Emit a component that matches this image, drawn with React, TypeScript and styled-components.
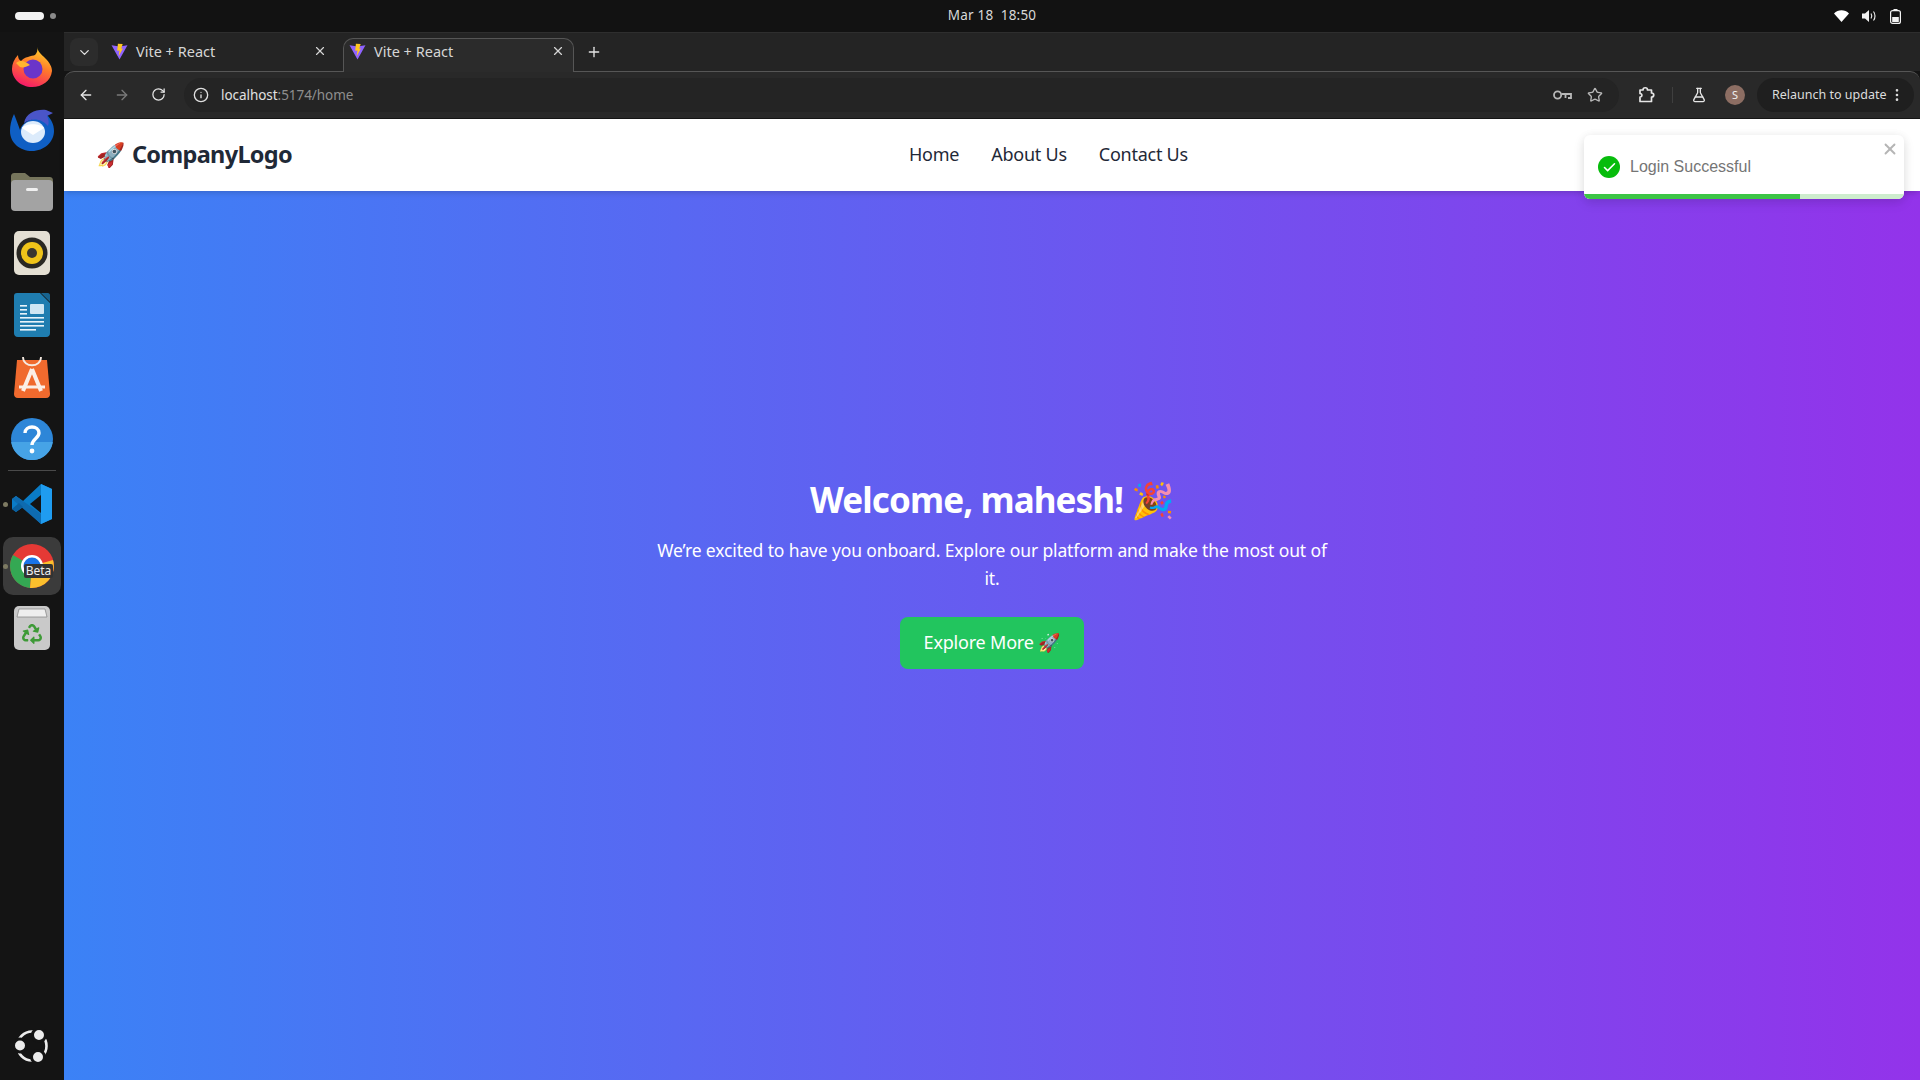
import React from 'react';
import styled, { createGlobalStyle } from 'styled-components';
import { ChevronDown, X, Plus, ArrowLeft, ArrowRight, RotateCw, Info, Star, FlaskConical, EllipsisVertical, Check } from 'lucide-react';
import { FaRecycle } from 'react-icons/fa';

const UI_FONT = `"Noto Sans", "Open Sans", "Noto Color Emoji", sans-serif`;

const GlobalStyle = createGlobalStyle`
    html, body {
        margin: 0;
        padding: 0;
        width: 1920px;
        height: 1080px;
        overflow: hidden;
        background: #141414;
        font-family: ${UI_FONT};
    }
    * { box-sizing: border-box; }
`;

const Desktop = styled.div`
    display: grid;
    grid-template-rows: 32px 1fr;
    grid-template-columns: 64px 1fr;
    width: 1920px;
    height: 1080px;
    background: #141414;
`;

// gnome top bar
const TopBar = styled.div`
    grid-column: 1 / 3;
    display: grid;
    grid-template-columns: 1fr auto 1fr;
    align-items: center;
    padding: 0 19px 0 15px;
    background: #121212;
    color: #d8d8d8;
`;

const Workspaces = styled.div`
    display: flex;
    align-items: center;
    gap: 6px;
`;

const WorkspacePill = styled.span`
    width: 29px;
    height: 8px;
    border-radius: 4px;
    background: #f2f2f2;
`;

const WorkspaceDot = styled.span`
    width: 6px;
    height: 6px;
    border-radius: 50%;
    background: #8a8a8a;
`;

const Clock = styled.div`
    font-size: 13.5px;
    letter-spacing: 0.2px;
    white-space: pre;
    margin-left: 68px;
    padding-bottom: 2px;
`;

const Tray = styled.div`
    display: flex;
    justify-content: flex-end;
    align-items: center;
    gap: 13px;
`;

const Dock = styled.div`
    display: flex;
    flex-direction: column;
    align-items: center;
    background: #141414;
    padding-top: 4px;
`;

const DockSlot = styled.div<{ $h: number; $active?: boolean }>`
    width: 58px;
    height: ${p => p.$h}px;
    flex: none;
    display: flex;
    align-items: center;
    justify-content: center;
    position: relative;
    border-radius: 10px;
    background: ${p => (p.$active ? '#3b3b3b' : 'transparent')};
`;

const DockRule = styled.div`
    width: 48px;
    height: 1px;
    flex: none;
    background: #4a4a4a;
`;

const RunningDot = styled.span`
    position: absolute;
    left: 0;
    top: 50%;
    margin-top: -2.5px;
    width: 5px;
    height: 5px;
    border-radius: 50%;
    background: #7d7a62;
`;

const DockBottom = styled.div`
    margin-top: auto;
    height: 68px;
    display: flex;
    align-items: center;
`;

const Browser = styled.div`
    display: flex;
    flex-direction: column;
    min-width: 0;
`;

const TabStrip = styled.div`
    height: 39px;
    flex: none;
    display: flex;
    align-items: flex-end;
    background: #242424;
    border-top: 1px solid #2e2e2e;
    padding-left: 40px;
    position: relative;
`;

const TabSearch = styled.div`
    position: absolute;
    left: 6px;
    top: 5px;
    width: 28px;
    height: 28px;
    border-radius: 8px;
    background: #2c2c2c;
    color: #e4e4e4;
    display: flex;
    align-items: center;
    justify-content: center;
`;

const Tab = styled.div<{ $active?: boolean }>`
    width: 231px;
    height: 34px;
    margin-left: ${p => (p.$active ? '8px' : '0')};
    margin-bottom: -1px;
    display: flex;
    align-items: center;
    padding: 0 8px ${p => (p.$active ? '9px' : '8px')} ${p => (p.$active ? '5px' : '7px')};
    gap: 8px;
    color: #d6d6d6;
    font-size: 14.5px;
    border-radius: 10px 10px 0 0;
    background: ${p => (p.$active ? '#2b2b2b' : 'transparent')};
    border: ${p => (p.$active ? '1px solid #565656' : '0')};
    border-bottom: 0;
    position: relative;
    z-index: 1;
`;

const TabTitle = styled.span`
    flex: 1;
    white-space: nowrap;
`;

const NewTab = styled.div`
    width: 40px;
    height: 33px;
    display: flex;
    align-items: center;
    justify-content: center;
    padding-bottom: 6px;
    color: #e4e4e4;
`;

const Toolbar = styled.div`
    height: 48px;
    flex: none;
    display: flex;
    align-items: center;
    background: #292929;
    border-top: 1px solid #565656;
    border-bottom: 1px solid #161616;
    border-top-left-radius: 10px;
    border-top-right-radius: 10px;
    padding: 0 6px 1px 4px;
`;

const NavIcon = styled.div<{ $dim?: boolean }>`
    width: 36px;
    display: flex;
    justify-content: center;
    color: ${p => (p.$dim ? '#7a7a7a' : '#e6e6e6')};
`;

const AddressBar = styled.div`
    width: 1435px;
    height: 34px;
    margin-left: 8px;
    display: flex;
    align-items: center;
    border-radius: 17px;
    background: #242424;
    padding: 0 16px 0 5px;
`;

const InfoChip = styled.div`
    width: 24px;
    display: flex;
    justify-content: center;
    color: #e0e0e0;
    margin-right: 8px;
`;

const Url = styled.div`
    flex: 1;
    font-size: 13.5px;
    letter-spacing: -0.05px;
    color: #e0e0e0;
`;

const UrlDim = styled.span`
    color: #8e8e8e;
`;

const AddressIcons = styled.div`
    display: flex;
    align-items: center;
    gap: 15px;
    color: #b8b8b8;
`;

const ToolIcon = styled.div`
    width: 36px;
    display: flex;
    justify-content: center;
    color: #e6e6e6;
`;

const ExtensionSlot = styled(ToolIcon)`
    margin-left: 9px;
`;

const ToolSep = styled.div`
    width: 1px;
    height: 16px;
    background: #3f3f3f;
    margin: 0 8px;
`;

const Avatar = styled.div`
    width: 20px;
    height: 20px;
    border-radius: 50%;
    background: #8d6e63;
    color: #f1f1f1;
    font-size: 11px;
    display: flex;
    align-items: center;
    justify-content: center;
    margin: 0 12px 0 8px;
`;

const Relaunch = styled.div`
    width: 157px;
    height: 34px;
    border-radius: 17px;
    background: #1f1f1f;
    color: #dcdcdc;
    font-size: 12.5px;
    display: flex;
    align-items: center;
    justify-content: space-between;
    padding: 0 9px 0 15px;
    white-space: nowrap;
`;

// the page itself
const Page = styled.div`
    flex: 1;
    display: flex;
    flex-direction: column;
    min-height: 0;
    position: relative;
`;

const NavBar = styled.nav`
    height: 72px;
    flex: none;
    display: grid;
    grid-template-columns: 813px auto;
    align-items: center;
    padding: 0 0 2px 32px;
    background: #fff;
    box-shadow: 0 4px 6px -1px rgba(0, 0, 0, 0.1), 0 2px 4px -2px rgba(0, 0, 0, 0.1);
    position: relative;
`;

const Brand = styled.div`
    font-size: 23.5px;
    font-weight: 700;
    letter-spacing: -0.7px;
    word-spacing: 2px;
    color: #1f2937;
    white-space: nowrap;
`;

const NavLinks = styled.div`
    display: flex;
    gap: 32px;
`;

const NavLink = styled.a`
    font-size: 18px;
    letter-spacing: -0.25px;
    color: #1f2937;
`;

const Hero = styled.main`
    flex: 1;
    display: flex;
    flex-direction: column;
    align-items: center;
    justify-content: center;
    padding-bottom: 123px;
    color: #fff;
    text-align: center;
    background: linear-gradient(to right, #3b82f6, #9333ea);
`;

const Title = styled.h1`
    margin: 0;
    font-size: 35px;
    line-height: 40px;
    font-weight: 700;
    letter-spacing: -0.9px;
`;

const Lead = styled.p`
    margin: 16px 0 0;
    width: 672px;
    font-size: 17.5px;
    line-height: 28px;
    letter-spacing: -0.13px;
`;

const Cta = styled.button`
    margin-top: 25px;
    width: 184px;
    height: 52px;
    padding: 0 0 2px;
    border: 0;
    border-radius: 8px;
    background: #22c55e;
    color: #fff;
    font-family: inherit;
    font-size: 18px;
    letter-spacing: -0.2px;
`;

const Toast = styled.div`
    position: absolute;
    top: 16px;
    right: 16px;
    width: 320px;
    height: 64px;
    background: #fff;
    border-radius: 6px;
    box-shadow: 0 4px 12px rgba(0, 0, 0, 0.1), 0 1px 10px rgba(0, 0, 0, 0.06);
    display: flex;
    align-items: center;
    padding: 0 14px;
    gap: 10px;
    overflow: hidden;
    font-family: "Liberation Sans", Arial, sans-serif;
    font-size: 16px;
    color: #757575;
`;

const ToastIcon = styled.div`
    width: 22px;
    height: 22px;
    border-radius: 50%;
    background: #07bc0c;
    color: #fff;
    display: flex;
    align-items: center;
    justify-content: center;
`;

const ToastClose = styled.div`
    position: absolute;
    top: 5px;
    right: 5px;
    color: #b5b5b5;
    display: flex;
`;

const ToastTrack = styled.div`
    position: absolute;
    left: 0;
    right: 0;
    bottom: 0;
    height: 5px;
    background: #cdeccd;
`;

const ToastBar = styled.div`
    height: 100%;
    background: #3cc546;
`;

function ViteIcon() {
    return (
        <svg width="17" height="17" viewBox="0 0 16 16">
            <path d="M0.5 2 L8 3.2 L15.5 2 L8 15.5 Z" fill="#8f63ff" />
            <path d="M6.5 0.8 L11 1 L9.6 5.5 L11.2 5.2 L7.2 12.4 L8 7 L5.8 7.4 Z" fill="#ffc71f" />
        </svg>
    );
}

function FirefoxIcon() {
    return (
        <svg width="42" height="42" viewBox="0 0 42 42">
            <defs>
                <linearGradient id="ff" x1="0.7" y1="0" x2="0.3" y2="1">
                    <stop offset="0" stopColor="#ffd52b" />
                    <stop offset="0.45" stopColor="#ff7a2a" />
                    <stop offset="1" stopColor="#f5156c" />
                </linearGradient>
            </defs>
            <path d="M26 1 C27 6 31 9 34 12 C39 17 41 21 41 25 C40 35 31 41 21 41 C10 41 1 33 1 23 C1 18 3 13 7 9 C7 12 8 14 10 15 C13 11 21 10 24 9 C26 7 27 4 26 1 Z" fill="url(#ff)" />
            <circle cx="22" cy="23" r="9.5" fill="#6a35c9" />
            <path d="M5 17 C10 13 15 16 19 19 C15 21 12 22 9 21 Z" fill="#ffb52e" />
        </svg>
    );
}

function ThunderbirdIcon() {
    return (
        <svg width="46" height="46" viewBox="0 0 46 46">
            <path d="M5 8 C2 14 1 20 1 25 C1 37 11 45 23 45 C35 45 45 36 45 25 C45 18 42 13 38 9 C30 12 15 12 11 24 C9 18 7 13 5 8 Z" fill="#0f5fc4" />
            <path d="M15 17 C17 7 27 3 37 4 L44 7 L38 10 C40 14 40 17 39 20 C32 12 22 12 15 17 Z" fill="#4a55c8" />
            <ellipse cx="24" cy="26" rx="12" ry="11" fill="#dcebfb" />
            <path d="M13 22 L24 29 L35 22 C31 17 17 17 13 22 Z" fill="#ffffff" />
        </svg>
    );
}

function FilesIcon() {
    return (
        <svg width="44" height="40" viewBox="0 0 44 40">
            <path d="M1 6 C1 3 2 2 5 2 H15 L20 6 H39 C42 6 43 7 43 10 V20 H1 Z" fill="#76755c" />
            <rect x="1" y="9" width="42" height="31" rx="4" fill="#a3a3a3" />
            <rect x="16" y="17" width="12" height="3" rx="1.5" fill="#f0f0f0" />
        </svg>
    );
}

function RhythmboxIcon() {
    return (
        <svg width="36" height="44" viewBox="0 0 36 44">
            <rect width="36" height="44" rx="5" fill="#e4dfd3" />
            <circle cx="18" cy="22" r="15.5" fill="#2a2823" />
            <circle cx="18" cy="22" r="11" fill="#f0c419" />
            <circle cx="18" cy="22" r="5" fill="#3a372f" />
        </svg>
    );
}

function WriterIcon() {
    return (
        <svg width="36" height="44" viewBox="0 0 36 44">
            <path d="M3 0 H26 L36 10 V40 C36 42 35 44 32 44 H4 C1 44 0 42 0 40 V3 C0 1 1 0 3 0 Z" fill="#1f7db0" />
            <path d="M27 0 H34 C35 0 36 1 36 2 V9 Z" fill="#17638e" />
            <rect x="6" y="12" width="7" height="1.6" fill="#e8f4fa" />
            <rect x="6" y="16" width="7" height="1.6" fill="#e8f4fa" />
            <rect x="6" y="20" width="7" height="1.6" fill="#e8f4fa" />
            <rect x="16" y="11" width="14" height="10" rx="1" fill="#cfe6f3" />
            <rect x="6" y="24" width="24" height="1.6" fill="#e8f4fa" />
            <rect x="6" y="28" width="24" height="1.6" fill="#e8f4fa" />
            <rect x="6" y="32" width="24" height="1.6" fill="#e8f4fa" />
            <rect x="6" y="36" width="16" height="1.6" fill="#e8f4fa" />
        </svg>
    );
}

function StoreIcon() {
    return (
        <svg width="36" height="42" viewBox="0 0 36 42">
            <path d="M3 4 H33 L36 38 C36 40 35 42 32 42 H4 C1 42 0 40 0 38 Z" fill="#f06a2e" />
            <path d="M9 1 C9 12 27 12 27 1" fill="none" stroke="#f5e9e0" strokeWidth="1.8" />
            <path d="M18 13 L9 35 M18 13 L27 35" stroke="#fbeee6" strokeWidth="4" fill="none" />
            <path d="M5 31 H31" stroke="#fbeee6" strokeWidth="3" />
        </svg>
    );
}

function HelpIcon() {
    return (
        <svg width="42" height="42" viewBox="0 0 42 42">
            <circle cx="21" cy="21" r="21" fill="#2d86d8" />
            <path d="M0.2 24 H41.8 A21 21 0 0 1 0.2 24 Z" fill="#46a3e6" />
            <path d="M14 15 C14 7 28 7 28 15 C28 20 21 21 21 27" fill="none" stroke="#fff" strokeWidth="3.4" />
            <circle cx="21" cy="33" r="2.4" fill="#fff" />
        </svg>
    );
}

function VsCodeIcon() {
    return (
        <svg width="42" height="42" viewBox="0 0 42 42">
            <path d="M30 1 L41 6 V36 L30 41 L12 24 L5 29 L1 26 V16 L5 13 L12 18 Z" fill="#0a7cc7" />
            <path d="M1 16 L5 13 L30 31 V41 Z" fill="#0e6bb0" />
            <path d="M30 1 L41 6 V36 L30 41 Z" fill="#1f9cf0" />
            <path d="M30 12 L19 21 L30 30 Z" fill="#141414" />
            <path d="M1 26 L5 29 L12 24 L8 20 Z" fill="#0a5f9e" />
        </svg>
    );
}

function ChromeIcon() {
    return (
        <svg width="46" height="46" viewBox="0 0 46 46">
            <circle cx="23" cy="23" r="22" fill="#e53935" />
            <path d="M23 23 L4 12 A22 22 0 0 0 21 45 Z" fill="#34a853" />
            <path d="M23 23 L21 45 A22 22 0 0 0 44 17 Z" fill="#fbc02d" />
            <circle cx="23" cy="23" r="11" fill="#fff" />
            <circle cx="23" cy="23" r="8.5" fill="#1a73e8" />
            <rect x="15" y="21" width="29" height="14" rx="2" fill="#333" />
            <text x="29.5" y="32" fontSize="12" fill="#eee" textAnchor="middle" fontFamily="Noto Sans, sans-serif">Beta</text>
        </svg>
    );
}

function TrashIcon() {
    return (
        <svg width="36" height="44" viewBox="0 0 36 44">
            <rect width="36" height="44" rx="5" fill="#c9c9c9" />
            <path d="M5 3 H31 L33 11 H3 Z" fill="#eeeeee" stroke="#8a8a8a" strokeWidth="0.8" />
            <FaRecycle x={8} y={18} size={20} color="#3e9a37" />
        </svg>
    );
}

function UbuntuIcon() {
    return (
        <svg width="34" height="34" viewBox="0 0 34 34">
            <circle cx="17" cy="17" r="14.5" fill="none" stroke="#ececec" strokeWidth="2.6" />
            <circle cx="5" cy="16.5" r="6.5" fill="#ececec" stroke="#141414" strokeWidth="3" />
            <circle cx="24" cy="6" r="6.5" fill="#ececec" stroke="#141414" strokeWidth="3" />
            <circle cx="23" cy="28" r="6.5" fill="#ececec" stroke="#141414" strokeWidth="3" />
        </svg>
    );
}

function KeyIcon() {
    return (
        <svg width="19" height="12" viewBox="0 0 19 12" fill="none" stroke="currentColor" strokeWidth="1.8">
            <circle cx="4.6" cy="6" r="3.6" />
            <path d="M8.5 5 H18 V9 H15 M12.5 5 V9" />
        </svg>
    );
}

function ExtensionIcon() {
    return (
        <svg width="17" height="17" viewBox="0 0 17 17" fill="none" stroke="currentColor" strokeWidth="1.7" strokeLinejoin="round">
            <path d="M2 4 H5 C5 1 9.5 1 9.5 4 H13.5 V7 C16.5 7 16.5 11 13.5 11 V15.5 H2 V11 C4.5 11 4.5 7.5 2 7.5 Z" />
        </svg>
    );
}

function WifiIcon() {
    return (
        <svg width="15" height="12" viewBox="0 0 15 12"><path d="M0 3.5 C4 -0.8 11 -0.8 15 3.5 L7.5 12 Z" fill="#fff" /></svg>
    );
}

function VolumeIcon() {
    return (
        <svg width="15" height="14" viewBox="0 0 15 14">
            <path d="M0 4.5 H3 L7 1 V13 L3 9.5 H0 Z" fill="#f2f2f2" />
            <path d="M9 4.5 C10 6 10 8 9 9.5 M11.5 2.5 C13.5 5 13.5 9 11.5 11.5" stroke="#f2f2f2" fill="none" strokeWidth="1.1" />
        </svg>
    );
}

function BatteryIcon() {
    return (
        <svg width="11" height="15" viewBox="0 0 11 15">
            <rect x="3.5" y="0" width="4" height="2" fill="#f2f2f2" />
            <rect x="0.6" y="1.6" width="9.8" height="12.8" rx="2" fill="none" stroke="#f2f2f2" strokeWidth="1.2" />
            <rect x="2.2" y="8" width="6.6" height="5" fill="#f2f2f2" />
        </svg>
    );
}

export default function App(): JSX.Element {
    return (
        <Desktop>
            <GlobalStyle />
            <TopBar>
                <Workspaces>
                    <WorkspacePill />
                    <WorkspaceDot />
                </Workspaces>
                <Clock>Mar 18  18:50</Clock>
                <Tray>
                    <WifiIcon />
                    <VolumeIcon />
                    <BatteryIcon />
                </Tray>
            </TopBar>

            <Dock>
                <DockSlot $h={62}><FirefoxIcon /></DockSlot>
                <DockSlot $h={62}><ThunderbirdIcon /></DockSlot>
                <DockSlot $h={62}><FilesIcon /></DockSlot>
                <DockSlot $h={62}><RhythmboxIcon /></DockSlot>
                <DockSlot $h={62}><WriterIcon /></DockSlot>
                <DockSlot $h={62}><StoreIcon /></DockSlot>
                <DockSlot $h={62}><HelpIcon /></DockSlot>
                <DockRule />
                <DockSlot $h={66}><RunningDot /><VsCodeIcon /></DockSlot>
                <DockSlot $h={58} $active><RunningDot /><ChromeIcon /></DockSlot>
                <DockSlot $h={66}><TrashIcon /></DockSlot>
                <DockBottom><UbuntuIcon /></DockBottom>
            </Dock>

            <Browser>
                <TabStrip>
                    <TabSearch><ChevronDown size={15} /></TabSearch>
                    <Tab>
                        <ViteIcon />
                        <TabTitle>Vite + React</TabTitle>
                        <X size={14} />
                    </Tab>
                    <Tab $active>
                        <ViteIcon />
                        <TabTitle>Vite + React</TabTitle>
                        <X size={14} />
                    </Tab>
                    <NewTab><Plus size={16} /></NewTab>
                </TabStrip>
                <Toolbar>
                    <NavIcon><ArrowLeft size={16} /></NavIcon>
                    <NavIcon $dim><ArrowRight size={16} /></NavIcon>
                    <NavIcon><RotateCw size={15} /></NavIcon>
                    <AddressBar>
                        <InfoChip><Info size={16} /></InfoChip>
                        <Url>localhost<UrlDim>:5174/home</UrlDim></Url>
                        <AddressIcons>
                            <KeyIcon />
                            <Star size={16} />
                        </AddressIcons>
                    </AddressBar>
                    <ExtensionSlot><ExtensionIcon /></ExtensionSlot>
                    <ToolSep />
                    <ToolIcon><FlaskConical size={16} /></ToolIcon>
                    <Avatar>S</Avatar>
                    <Relaunch>
                        Relaunch to update
                        <EllipsisVertical size={16} />
                    </Relaunch>
                </Toolbar>
                <Page>
                    <NavBar>
                        <Brand>🚀 CompanyLogo</Brand>
                        <NavLinks>
                            <NavLink>Home</NavLink>
                            <NavLink>About Us</NavLink>
                            <NavLink>Contact Us</NavLink>
                        </NavLinks>
                    </NavBar>
                    <Hero>
                        <Title>Welcome, mahesh! 🎉</Title>
                        <Lead>We’re excited to have you onboard. Explore our platform and make the most out of it.</Lead>
                        <Cta>Explore More 🚀</Cta>
                    </Hero>
                    <Toast>
                        <ToastIcon><Check size={15} strokeWidth={2.5} /></ToastIcon>
                        Login Successful
                        <ToastClose><X size={18} strokeWidth={2.5} /></ToastClose>
                        <ToastTrack><ToastBar style={{ width: '67.4%' }} /></ToastTrack>
                    </Toast>
                </Page>
            </Browser>
        </Desktop>
    );
}
